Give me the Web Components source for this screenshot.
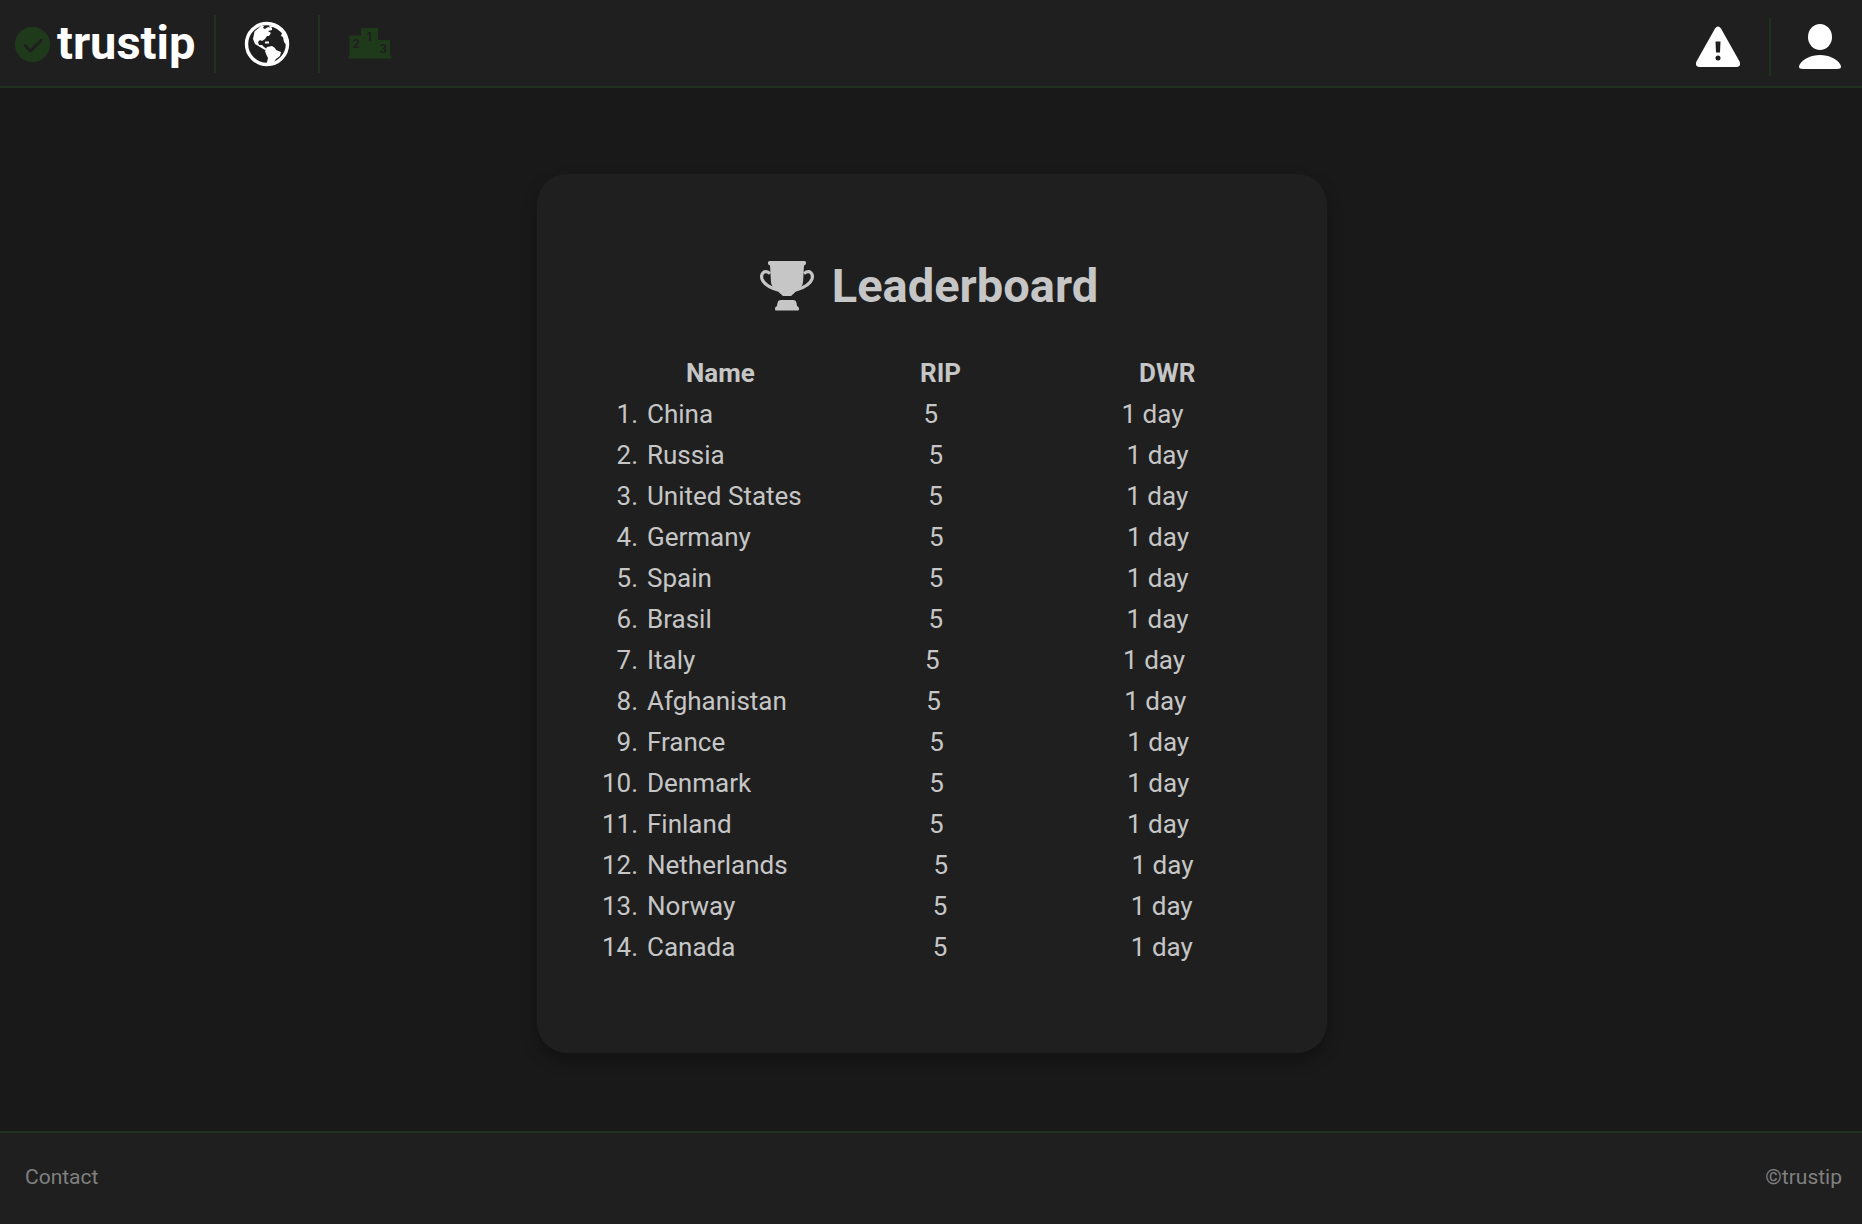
<!DOCTYPE html>
<html lang="en">
<head>
<meta charset="utf-8">
<meta name="viewport" content="width=device-width, initial-scale=1">
<title>trustip – Leaderboard</title>
<style>
  :root { --bg: #191919; --panel: #1f1f1f; --green: #1f3a1b; --line: #1f321d; --text: #c6c6c6; --muted: #808080; }
  body { margin: 0; background: var(--bg); color: var(--text); font-family: Roboto, "Liberation Sans", sans-serif; }
</style>
</head>
<body>
<trustip-app></trustip-app>
<script>
const define = (name, html, setup) => customElements.define(name, class extends HTMLElement {
  constructor() {
    super();
    this.attachShadow({ mode: 'open' }).innerHTML = html;
    if (setup) setup(this.shadowRoot, this);
  }
});

define('tip-header', `
<style>
  :host { display: block; background: var(--panel); border-bottom: 2px solid var(--line); }
  header, nav, .account { display: flex; align-items: center; }
  header { height: 86px; justify-content: space-between; box-sizing: border-box; padding: 2px 21px 0 14px; }
  a { display: flex; align-items: center; color: #fff; text-decoration: none; }
  svg { display: block; }
  .brand { gap: 6px; font-size: 47px; line-height: 56px; font-weight: 700; }
  .brand span { margin-top: -2px; }
  .rule { width: 2px; height: 58px; background: var(--line); }
  nav .rule { margin-left: 19px; }
  .globe { margin-left: 28px; }
  nav .globe + .rule { margin-left: 28px; }
  .podium { margin-left: 28px; color: var(--green); }
  .account { padding-top: 6px; }
  .account .rule { margin: 0 28px; }
</style>
<header>
  <nav aria-label="Main">
    <a class="brand" href="#home">
      <svg width="37" height="37" viewBox="0 0 37 37" aria-hidden="true"><circle cx="18.5" cy="18.5" r="17.6" fill="#1f3a1b"/><path d="M11 19.5l5.5 5.5L27.500 14" fill="none" stroke="#1f1f1f" stroke-width="2.600" stroke-linecap="round" stroke-linejoin="round"/></svg>
      <span>trustip</span>
    </a>
    <span class="rule"></span>
    <a class="globe" href="#world" aria-label="World">
      <svg width="46" height="46" viewBox="0 0 46 46" fill="#fff" aria-hidden="true"><circle cx="23" cy="23" r="20.500" fill="none" stroke="#fff" stroke-width="3.400"/>
      <path d="M10.500 10.500L17 5l3 0-1 2 2 1 3-2 4 1 0 2-4 1 3 2-2 3-2 0-2 3-3 2-2-1-2 2 1 3 3 0 2 2 3 2-2 1-5-3-5-3-2-5 1-5z"/>
      <path d="M25 4l9 2 6 6 3 9v4l-3-4-1-5-2-1 1-3-5-4-4-2-3 1z"/>
      <path d="M21 20.500h4v2h-4zM23 26l5-1 3 2 1 2 5 2-1 4-4 3-2 3-4 3-1 1h-3l2-8-2-4-1-3z"/></svg>
    </a>
    <span class="rule"></span>
    <a class="podium" href="#leaderboard" aria-label="Leaderboard" aria-current="page">
      <svg width="44" height="32" viewBox="0 0 44 32" aria-hidden="true"><path d="M1.500 7.500H13V1q0-1 1-1h15q1 0 1 1v11h11q1 0 1 1v15h1.500v2.500H.5V28h1z" fill="currentColor"/>
      <g fill="#1f1f1f" font-family="Inter, sans-serif" font-weight="700" font-size="12" text-anchor="middle"><text x="8" y="20">2</text><text x="21" y="13">1</text><text x="35" y="25">3</text></g></svg>
    </a>
  </nav>
  <div class="account">
    <a href="#alerts" aria-label="Alerts">
      <svg width="46" height="42" viewBox="0 0 46 42" aria-hidden="true"><path d="M20 2.500q3-4 6 0L44.500 35.500Q46.500 40.500 41.500 41H4.500Q-.5 40.500 1.500 35.500z" fill="#fff"/><path d="M20.500 15.500h5l-.5 11h-4z" fill="#1f1f1f"/><circle cx="23" cy="32" r="2.500" fill="#1f1f1f"/></svg>
    </a>
    <span class="rule"></span>
    <a href="#profile" aria-label="Profile">
      <svg width="42" height="46" viewBox="0 0 42 46" fill="#fff" aria-hidden="true"><ellipse cx="21" cy="13" rx="12" ry="13"/><path d="M21 31c9 0 17 4 20 9q3 5-3 5H4q-6 0-3-5c3-5 11-9 20-9z"/></svg>
    </a>
  </div>
</header>`);

define('tip-card', `
<style>
  :host { display: block; box-sizing: border-box; width: 790px; max-width: 100%; padding: 84px 64px 85px; border-radius: 30px; background: var(--panel); box-shadow: 0 8px 16px rgba(0, 0, 0, .3); }
  h1 { display: flex; align-items: center; justify-content: center; gap: 18px; margin: 0 6px 39px 0; font-size: 47px; line-height: 56px; font-weight: 700; }
</style>
<h1><slot name="icon"></slot><slot name="title"></slot></h1>
<slot></slot>`);

/* Pads are counted in spaces after each name. */
const countries = [['China', 32], ['Russia', 31], ['United States', 19], ['Germany', 27], ['Spain', 33], ['Brasil', 33], ['Italy', 35], ['Afghanistan', 21], ['France', 31], ['Denmark', 27], ['Finland', 30], ['Netherlands', 22], ['Norway', 30], ['Canada', 30]];

define('tip-ranking', `
<style>
  :host { display: block; font-size: 26px; line-height: 41px; }
  table, thead, tbody { display: block; }
  tr { display: flex; }
  td, th { display: block; padding: 0; white-space: pre; text-align: left; }
  .rank { box-sizing: border-box; width: 46px; padding-right: 9px; display: flex; justify-content: flex-end; }
  .rip { width: 198px; padding-left: 4px; }
  thead .name { box-sizing: border-box; width: 273px; padding-left: 39px; }
  thead .rip { width: 219px; padding: 0; }
</style>
<table>
  <thead><tr><td class="rank"></td><th class="name" scope="col">Name</th><th class="rip" scope="col">RIP</th><th scope="col">DWR</th></tr></thead>
  <tbody></tbody>
</table>`, root => {
  root.querySelector('tbody').innerHTML = countries.map(([name, pad], i) =>
    `<tr><td class="rank">${i + 1}.</td><td>${name}${' '.repeat(pad)}</td><td class="rip">5</td><td>1 day</td></tr>`).join('');
});

define('tip-footer', `
<style>
  :host { display: block; background: var(--panel); border-top: 2px solid var(--line); color: var(--muted); font-size: 21px; line-height: 24px; }
  footer { display: flex; align-items: center; justify-content: space-between; height: 91px; box-sizing: border-box; padding: 0 20px 4px 25px; }
  a { color: inherit; text-decoration: none; }
</style>
<footer><a href="#contact">Contact</a><span>©trustip</span></footer>`);

define('trustip-app', `
<style>
  :host { display: flex; flex-direction: column; min-height: 100vh; }
  main { flex: 1; display: flex; justify-content: center; align-items: flex-start; padding: 86px 0 72px 2px; }
  svg { display: block; }
</style>
<tip-header></tip-header>
<main>
  <tip-card>
    <svg slot="icon" width="54" height="50" viewBox="0 0 54 50" fill="currentColor" aria-hidden="true"><path d="M9.500 0h35q1.500 0 1.500 1.500v1q0 1.500-2 2l-1 17q-1 6-7 9l-5 4.500h-8L18 30.500q-6-3-7-9l-1-17q-2-.5-2-2v-1Q8 0 9.500 0zM21 39h12q3 0 3.500 3l.5 3q2 .5 2 2.500v1q0 1-1 1H16q-1 0-1-1v-1q0-2 2-2.500l.5-3q.5-3 3.500-3z"/><path d="M10 12.500C4 8 .5 13 2 18c2 6 9 9 16 11M44 12.500c6-4.500 9.500.5 8 5.500-2 6-9 9-16 11" fill="none" stroke="currentColor" stroke-width="3.200"/></svg>
    <span slot="title">Leaderboard</span>
    <tip-ranking></tip-ranking>
  </tip-card>
</main>
<tip-footer></tip-footer>`);
</script>
</body>
</html>
